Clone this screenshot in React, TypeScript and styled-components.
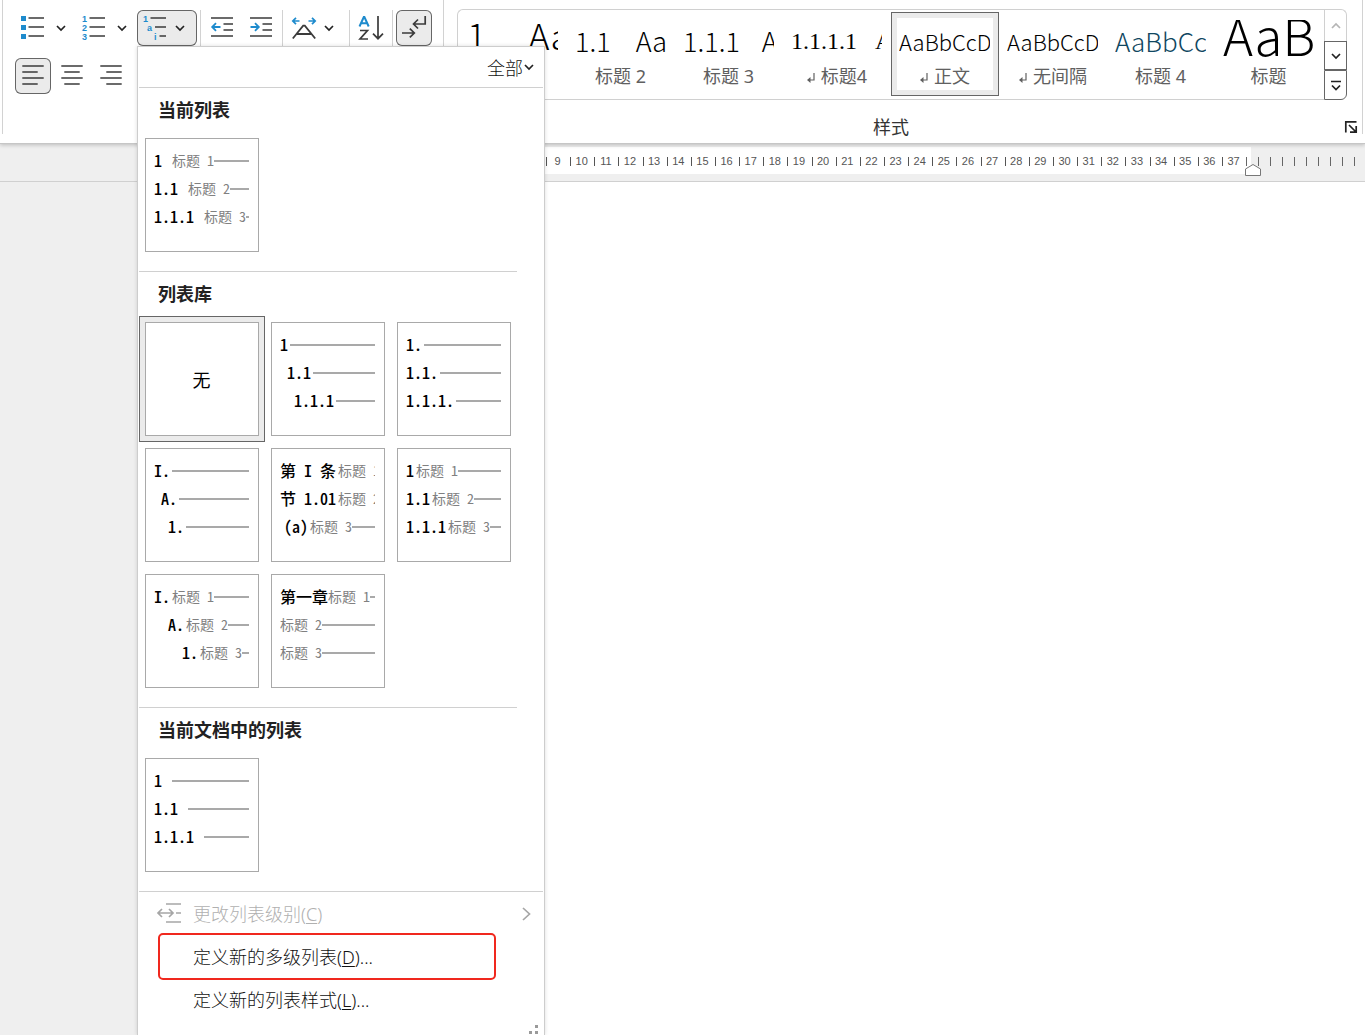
import React from "react";
import styled, { createGlobalStyle, css } from "styled-components";

const INK = "#3b3b3b";
const BLUE = "#1e8bcd";
const CJK = '"Noto Sans", "Noto Sans CJK SC", sans-serif';
const LIGHT_CJK = '"Noto Sans CJK SC", "Noto Sans", sans-serif';

const GlobalStyle = createGlobalStyle`
  *, *::before, *::after { box-sizing: border-box; }
  body { margin: 0; background: #fff; font-family: ${CJK}; }
  button { font: inherit; color: inherit; background: none; border: 0; padding: 0; margin: 0; cursor: pointer; }
  h2, p { margin: 0; }
  svg { display: block; flex: none; overflow: visible; }
`;

const Window = styled.div`
  min-height: 100vh;
  display: flex;
  flex-direction: column;
  overflow: hidden;
`;

/* ---------- ribbon ---------- */

const Ribbon = styled.header`
  position: relative;
  z-index: 2;
  display: flex;
  height: 144px;
  padding-left: 2px;
  padding-right: 2px;
  background: #fff;
  border-bottom: 1px solid #c6c6c6;
  box-shadow: 0 1px 4px rgba(0, 0, 0, 0.22);
`;

const GroupRule = styled.div`
  flex: none;
  width: 1px;
  height: 134px;
  background: #d2d2d2;
`;

const ParagraphGroup = styled.section`
  flex: none;
  width: 440px;
  padding: 10px 0 0 12px;
  display: flex;
  flex-direction: column;
  gap: 12px;
`;

const ToolRow = styled.div`
  display: flex;
  gap: 3px;
`;

const Pair = styled.div`
  display: flex;
  gap: 1px;
`;

const ToolRule = styled.div`
  width: 1px;
  height: 36px;
  background: #d2d2d2;
`;

const pressed = css`
  background: #ebebeb;
  box-shadow: inset 0 0 0 1px #666;
`;

const ToolButton = styled.button<{ $on?: boolean }>`
  width: 36px;
  height: 36px;
  border-radius: 6px;
  display: flex;
  align-items: center;
  justify-content: center;
  ${(p) => p.$on && pressed}
`;

const SplitButton = styled.button<{ $on?: boolean; $wide?: boolean }>`
  width: 60px;
  height: 36px;
  border-radius: 6px;
  display: flex;
  align-items: center;
  padding-left: 6px;
  gap: ${(p) => (p.$wide ? 11 : 8)}px;
  ${(p) => p.$on && pressed}
`;

const MenuAnchor = styled.div`
  position: relative;
`;

const StylesGroup = styled.section`
  flex: 1;
  min-width: 0;
  padding: 9px 15px 0 13px;
`;

const Gallery = styled.div`
  display: flex;
  height: 91px;
`;

const StyleList = styled.div`
  flex: 1;
  min-width: 0;
  display: flex;
  overflow: hidden;
  padding: 2px 0 0 1px;
  border: 1px solid #d0d0d0;
  border-right: 0;
  border-radius: 6px 0 0 6px;
`;

const StyleCard = styled.button<{ $on?: boolean }>`
  flex: none;
  width: 108px;
  height: 84px;
  border: 1px solid ${(p) => (p.$on ? "#666" : "transparent")};
  padding: 5px;
  background: ${(p) => (p.$on ? "#ebebeb" : "transparent")};
`;

const StyleFace = styled.span`
  display: flex;
  flex-direction: column;
  height: 72px;
  padding: 2px 3px 0 2px;
  background: #fff;
`;

const Sample = styled.span<{
  $size: number;
  $color?: string;
  $serif?: boolean;
  $weight?: number;
  $gap?: number;
  $tall?: boolean;
}>`
  display: flex;
  gap: ${(p) => p.$gap ?? 0}px;
  height: 43px;
  overflow: hidden;
  white-space: nowrap;
  font-family: ${(p) => (p.$serif ? '"Liberation Serif", serif' : LIGHT_CJK)};
  font-weight: ${(p) => p.$weight ?? 300};
  font-size: ${(p) => p.$size}px;
  line-height: ${(p) => (p.$tall ? 28 : 42)}px;
  color: ${(p) => p.$color ?? "#000"};
`;

const StyleName = styled.span`
  display: flex;
  align-items: center;
  justify-content: center;
  gap: 6px;
  height: 27px;
  font-size: 18px;
  line-height: 27px;
  white-space: nowrap;
  color: #606060;
`;

const ScrollColumn = styled.div`
  flex: none;
  width: 23px;
  display: grid;
  grid-template-rows: 32px 29px 30px;
`;

const ScrollButton = styled.button<{ $place: "top" | "mid" | "end" }>`
  display: flex;
  align-items: center;
  justify-content: center;
  border: 1px solid ${(p) => (p.$place === "top" ? "#d0d0d0" : "#666")};
  border-bottom-width: ${(p) => (p.$place === "top" ? 0 : 1)}px;
  border-radius: ${(p) => (p.$place === "top" ? "0 6px 0 0" : p.$place === "end" ? "0 0 6px 0" : "0")};
`;

const GroupFooter = styled.div`
  margin-top: 17px;
  margin-right: -10px;
  display: flex;
  align-items: center;
`;

const GroupLabel = styled.p`
  flex: 1;
  padding-right: 20px;
  text-align: center;
  font-size: 18px;
  line-height: 20px;
  color: #333;
`;

/* ---------- ruler and page ---------- */

const RulerBar = styled.div`
  display: flex;
  height: 38px;
  padding-top: 3px;
  background: #efefef;
  border-bottom: 1px solid #d0d0d0;
`;

const RulerMargin = styled.div`
  flex: none;
  width: 138px;
`;

const RulerText = styled.div`
  position: relative;
  flex: none;
  width: 1113px;
  height: 27px;
  padding: 1px 4px 0 408px;
  display: flex;
  align-items: center;
  background: #fff;
`;

const RulerCell = styled.span`
  flex: 1;
  height: 9px;
  border-left: 1px solid #555;
  display: flex;
  align-items: center;
  justify-content: center;
  padding-right: 2px;
  font: 11px/11px "Liberation Sans", sans-serif;
  color: #555;
`;

const IndentMarker = styled.div`
  position: absolute;
  right: -10px;
  top: 16px;
`;

const RulerTail = styled.div`
  flex: 1;
  height: 27px;
  padding: 1px 0 0 7px;
  display: flex;
  align-items: center;
  overflow: hidden;
`;

const Tick = styled.i<{ $last?: boolean }>`
  flex: none;
  width: ${(p) => (p.$last ? 1 : 12)}px;
  height: 9px;
  border-left: 1px solid #666;
`;

const Workspace = styled.main`
  flex: 1;
  display: flex;
`;

const Gutter = styled.div`
  flex: none;
  width: 138px;
  background: #efefef;
`;

const Paper = styled.div`
  flex: 1;
  background: #fff;
`;

/* ---------- list menu ---------- */

const Menu = styled.div`
  position: absolute;
  top: 36px;
  left: 0;
  width: 408px;
  padding: 0 1px;
  background: #fff;
  border: 1px solid #cdcdcd;
  border-bottom: 0;
  box-shadow: 0 0 4px rgba(0, 0, 0, 0.14);
  color: #222;
`;

const MenuHead = styled.div`
  display: flex;
  justify-content: flex-end;
  height: 41px;
  padding-right: 9px;
  border-bottom: 1px solid #d0d0d0;
`;

const FilterButton = styled.button`
  display: flex;
  align-items: center;
  gap: 1px;
  font-family: ${LIGHT_CJK};
  font-weight: 300;
  font-size: 18px;
  line-height: 20px;
  color: #111;
`;

const Section = styled.section`
  padding-bottom: 13px;
`;

const SectionTitle = styled.h2`
  height: 44px;
  padding-left: 19px;
  font-size: 18px;
  font-weight: 700;
  line-height: 44px;
`;

const Cells = styled.div`
  display: grid;
  grid-template-columns: repeat(3, 126px);
`;

const Rule = styled.div<{ $full?: boolean }>`
  height: 1px;
  margin-right: ${(p) => (p.$full ? 0 : 26)}px;
  background: #d0d0d0;
`;

const Cell = styled.button<{ $on?: boolean }>`
  width: 126px;
  height: 126px;
  padding: 5px;
  border: 1px solid ${(p) => (p.$on ? "#666" : "transparent")};
  background: ${(p) => (p.$on ? "#ebebeb" : "transparent")};
`;

const Card = styled.span<{ $center?: boolean }>`
  display: flex;
  flex-direction: column;
  align-items: ${(p) => (p.$center ? "center" : "stretch")};
  justify-content: ${(p) => (p.$center ? "center" : "flex-start")};
  height: 114px;
  padding: 8px 9px 8px 8px;
  border: 1px solid #a9a9a9;
  background: #fff;
  font-family: ${LIGHT_CJK};
  font-size: 18px;
  color: #000;
`;

const Level = styled.span<{ $indent: number }>`
  display: flex;
  align-items: center;
  height: 28px;
  padding-left: ${(p) => p.$indent}px;
  overflow: hidden;
  white-space: pre;
  font-feature-settings: "hwid";
`;

const Mark = styled.span<{ $gap: number }>`
  flex: none;
  margin-right: ${(p) => p.$gap}px;
  padding-bottom: 2px;
  font-size: 16px;
  font-weight: 500;
  line-height: 26px;
`;

const Heading = styled.span`
  flex: none;
  padding-bottom: 2px;
  font-size: 14px;
  font-weight: 400;
  line-height: 26px;
  color: #808080;
`;

const Stroke = styled.i`
  flex: 1;
  height: 2px;
  background: #a9a9a9;
`;

const Commands = styled.div`
  position: relative;
`;

const Command = styled.button`
  display: flex;
  align-items: center;
  width: 100%;
  height: 43px;
  padding: 0 12px 0 18px;
  font-family: ${CJK};
  font-weight: 300;
  font-size: 18px;
  line-height: 24px;
  text-align: left;
  color: #111;
  &:disabled { color: #b0b0b0; cursor: default; }
`;

const CommandIcon = styled.span`
  flex: none;
  width: 36px;
`;

const CommandText = styled.span`
  flex: 1;
  u { text-underline-offset: 2px; text-decoration-thickness: 1px; }
`;

const Callout = styled.div`
  position: absolute;
  top: 41px;
  left: 19px;
  right: 47px;
  height: 47px;
  border: 2px solid #f0281e;
  border-radius: 5px;
  pointer-events: none;
`;

const MenuFoot = styled.div`
  display: flex;
  justify-content: flex-end;
  align-items: flex-end;
  height: 14px;
  padding-right: 4px;
`;

/* ---------- icons ---------- */

const Chevron = ({ color = "#222", up = false }: { color?: string; up?: boolean }) => (
  <svg width="10" height="6" viewBox="0 0 10 6" fill="none" stroke={color} strokeWidth="1.7">
    <path d={up ? "M1 5 L5 1 L9 5" : "M1 1 L5 5 L9 1"} />
  </svg>
);

const Icon = ({ children }: { children: React.ReactNode }) => (
  <svg width="24" height="24" viewBox="0 0 24 24" fill="none" stroke={INK} strokeWidth="1.5">
    {children}
  </svg>
);

const glyph = { fill: BLUE, stroke: "none", fontFamily: "Liberation Sans", fontWeight: 700, fontSize: 9 };

const BulletsIcon = () => (
  <Icon>
    <path d="M0 0h5v5H0zM0 9h5v5H0zM0 18h5v5H0z" fill={BLUE} stroke="none" />
    <path d="M7.500 2h15.500M7.500 11h15.500M7.500 20h15.500" />
  </Icon>
);

const NumbersIcon = () => (
  <Icon>
    <text {...glyph} x="0" y="6">1</text>
    <text {...glyph} x="0" y="15">2</text>
    <text {...glyph} x="0" y="24">3</text>
    <path d="M7.500 2H23M7.500 11H23M7.500 20H23" />
  </Icon>
);

const MultiIcon = () => (
  <Icon>
    <text {...glyph} x="0" y="6">1</text>
    <text {...glyph} x="4" y="15">a</text>
    <text {...glyph} x="11" y="24">i</text>
    <path d="M7.500 2H23M12 11h11M16.500 20H23" />
  </Icon>
);

const IndentIcon = ({ out = false }: { out?: boolean }) => (
  <Icon>
    <path d="M1 2h22M1 20h22M13.500 8H23M13.500 14H23" />
    <path d={out ? "M10.500 11H2.500M6 7.200L2.200 11L6 14.800" : "M1.500 11h8M6 7.200L9.800 11L6 14.800"} stroke={BLUE} strokeWidth="1.8" />
  </Icon>
);

const ScaleIcon = () => (
  <Icon>
    <path d="M7.500 5H1M4 1.800L.8 5L4 8.200M16.500 5H23M20 1.800L23.200 5L20 8.200" stroke={BLUE} strokeWidth="1.700" />
    <path d="M.8 22.500L11.200 9.700h1.600L23.200 22.500M5 18h14" strokeWidth="1.800" />
  </Icon>
);

const SortIcon = () => (
  <svg width="26" height="24" viewBox="0 0 26 24" fill="none" stroke={INK} strokeWidth="1.7">
    <path d="M1.500 10.500L5.800 1h.6l4.300 9.500M3.200 7.200h5.800" stroke={BLUE} strokeWidth="2" />
    <path d="M2 14.500h7.500L2 23h8M20 0v22.500M15 17.700l5 5l5-5" />
  </svg>
);

const MarksIcon = () => (
  <Icon>
    <path d="M23.200 0v8H11.500M16 3.500L11.500 8L16 12.500M0 17h12M7.800 12.700L12.300 17L7.800 21.300" strokeWidth="1.700" />
  </Icon>
);

const AlignIcon = ({ side }: { side: "left" | "center" | "right" }) => {
  const x = side === "left" ? 1.3 : side === "center" ? 4.3 : 7.3;
  return (
    <Icon>
      <path d={`M1.300 2h21.400M${x} 8h15.400M1.300 14h21.400M${x} 20h15.400`} />
    </Icon>
  );
};

const ReturnGlyph = () => (
  <svg width="9" height="10" viewBox="0 0 9 10" fill="none" stroke="#606060" strokeWidth="1.2">
    <path d="M8 1v7H2" />
    <path d="M4.500 5L1 8l3.500 3z" fill="#606060" stroke="none" />
  </svg>
);

const MoreGlyph = () => (
  <svg width="12" height="11" viewBox="0 0 12 11" fill="none" stroke="#222" strokeWidth="1.7">
    <path d="M1 1.500h10M2 5.500l4 4l4-4" />
  </svg>
);

const LauncherGlyph = () => (
  <svg width="12" height="12" viewBox="0 0 12 12" fill="none" stroke="#222" strokeWidth="1.700">
    <path d="M.8 11.500V.8h10.700M4 4l6.500 6.500M11.200 5v6.200H5" />
  </svg>
);

const LevelIcon = () => (
  <svg width="26" height="22" viewBox="0 0 26 22" fill="none" stroke="#a6a6a6" strokeWidth="1.700">
    <path d="M9 1h15M19 10h5M9 19h15M1 10h15M5 6l-4 4l4 4M12 6l4 4l-4 4" />
  </svg>
);

const Submenu = () => (
  <svg width="9" height="14" viewBox="0 0 9 14" fill="none" stroke="#a6a6a6" strokeWidth="1.700">
    <path d="M1 1l6.500 6L1 13" />
  </svg>
);

const Grip = () => (
  <svg width="10" height="10" viewBox="0 0 10 10" fill="#9a9a9a">
    <path d="M6 0h3v3H6zM0 6h3v3H0zM6 6h3v3H6z" />
  </svg>
);

/* ---------- data ---------- */

type LevelSpec = { mark?: string; indent?: number; gap?: number; heading?: string };

const currentList: LevelSpec[] = [
  { mark: "1", gap: 10, heading: "标题 1" },
  { mark: "1.1", gap: 10, heading: "标题 2" },
  { mark: "1.1.1", gap: 10, heading: "标题 3" },
];

const library: LevelSpec[][] = [
  [{ mark: "1" }, { mark: "1.1", indent: 7 }, { mark: "1.1.1", indent: 14 }],
  [{ mark: "1." }, { mark: "1.1." }, { mark: "1.1.1." }],
  [{ mark: "I." }, { mark: "A.", indent: 7 }, { mark: "1.", indent: 14 }],
  [
    { mark: "第 I 条", heading: "标题 1" },
    { mark: "节 1.01", heading: "标题 2" },
    { mark: "(a)", indent: 4, heading: "标题 3" },
  ],
  [
    { mark: "1", heading: "标题 1" },
    { mark: "1.1", heading: "标题 2" },
    { mark: "1.1.1", heading: "标题 3" },
  ],
  [
    { mark: "I.", heading: "标题 1" },
    { mark: "A.", indent: 14, heading: "标题 2" },
    { mark: "1.", indent: 28, heading: "标题 3" },
  ],
  [{ mark: "第一章", gap: 0, heading: "标题 1" }, { heading: "标题 2" }, { heading: "标题 3" }],
];

const documentList: LevelSpec[] = [
  { mark: "1", gap: 10 },
  { mark: "1.1", gap: 10 },
  { mark: "1.1.1", gap: 10 },
];

type StyleSpec = {
  name?: string;
  parts: string[];
  size: number;
  gap?: number;
  weight?: number;
  color?: string;
  serif?: boolean;
  tall?: boolean;
  mark?: boolean;
  on?: boolean;
};

const styleSpecs: StyleSpec[] = [
  { parts: ["1", "Aa"], size: 36, gap: 42, tall: true },
  { name: "标题 2", parts: ["1.1", "Aa"], size: 27, gap: 25 },
  { name: "标题 3", parts: ["1.1.1", "A"], size: 27, gap: 22 },
  { name: "标题4", parts: ["1.1.1.1", "A"], size: 24, gap: 18, weight: 400, serif: true, mark: true },
  { name: "正文", parts: ["AaBbCcDd"], size: 22, mark: true, on: true },
  { name: "无间隔", parts: ["AaBbCcDd"], size: 22, mark: true },
  { name: "标题 4", parts: ["AaBbCcD"], size: 26, color: "#0f4761" },
  { name: "标题", parts: ["AaB"], size: 51, tall: true },
];

const rulerNumbers = Array.from({ length: 29 }, (_, i) => i + 9);

/* ---------- parts ---------- */

const ListCell = ({ levels, label }: { levels: LevelSpec[]; label: string }) => (
  <Cell type="button" aria-label={label}>
    <Card>
      {levels.map((l, i) => (
        <Level key={i} $indent={l.indent ?? 0}>
          {l.mark && <Mark $gap={l.gap ?? 2}>{l.mark}</Mark>}
          {l.heading && <Heading>{l.heading}</Heading>}
          <Stroke />
        </Level>
      ))}
    </Card>
  </Cell>
);

const ListMenu = () => (
  <Menu>
    <MenuHead>
      <FilterButton type="button">
        全部
        <Chevron />
      </FilterButton>
    </MenuHead>
    <Section>
      <SectionTitle>当前列表</SectionTitle>
      <Cells>
        <ListCell levels={currentList} label="当前列表" />
      </Cells>
    </Section>
    <Rule />
    <Section>
      <SectionTitle>列表库</SectionTitle>
      <Cells>
        <Cell type="button" $on>
          <Card $center>无</Card>
        </Cell>
        {library.map((levels, i) => (
          <ListCell key={i} levels={levels} label={`列表 ${i + 1}`} />
        ))}
      </Cells>
    </Section>
    <Rule />
    <Section>
      <SectionTitle>当前文档中的列表</SectionTitle>
      <Cells>
        <ListCell levels={documentList} label="文档列表" />
      </Cells>
    </Section>
    <Rule $full />
    <Commands>
      <Command type="button" disabled>
        <CommandIcon><LevelIcon /></CommandIcon>
        <CommandText>更改列表级别(<u>C</u>)</CommandText>
        <Submenu />
      </Command>
      <Command type="button">
        <CommandIcon />
        <CommandText>定义新的多级列表(<u>D</u>)...</CommandText>
      </Command>
      <Command type="button">
        <CommandIcon />
        <CommandText>定义新的列表样式(<u>L</u>)...</CommandText>
      </Command>
      <Callout />
    </Commands>
    <MenuFoot><Grip /></MenuFoot>
  </Menu>
);

export default function App() {
  return (
    <Window>
      <GlobalStyle />
      <Ribbon>
        <GroupRule />
        <ParagraphGroup>
          <ToolRow>
            <Pair>
              <SplitButton type="button" aria-label="项目符号" $wide><BulletsIcon /><Chevron /></SplitButton>
              <SplitButton type="button" aria-label="编号" $wide><NumbersIcon /><Chevron /></SplitButton>
              <MenuAnchor>
                <SplitButton type="button" aria-label="多级列表" aria-expanded $on><MultiIcon /><Chevron /></SplitButton>
                <ListMenu />
              </MenuAnchor>
            </Pair>
            <ToolRule />
            <ToolButton type="button" aria-label="减少缩进量"><IndentIcon out /></ToolButton>
            <ToolButton type="button" aria-label="增加缩进量"><IndentIcon /></ToolButton>
            <ToolRule />
            <SplitButton type="button" aria-label="中文版式"><ScaleIcon /><Chevron /></SplitButton>
            <ToolRule />
            <ToolButton type="button" aria-label="排序"><SortIcon /></ToolButton>
            <ToolRule />
            <ToolButton type="button" aria-label="显示编辑标记" $on><MarksIcon /></ToolButton>
          </ToolRow>
          <ToolRow>
            <ToolButton type="button" aria-label="左对齐" $on><AlignIcon side="left" /></ToolButton>
            <ToolButton type="button" aria-label="居中"><AlignIcon side="center" /></ToolButton>
            <ToolButton type="button" aria-label="右对齐"><AlignIcon side="right" /></ToolButton>
          </ToolRow>
        </ParagraphGroup>
        <GroupRule />
        <StylesGroup>
          <Gallery>
            <StyleList>
              {styleSpecs.map((s, i) => (
                <StyleCard key={i} type="button" $on={s.on}>
                  <StyleFace>
                    <Sample
                      $size={s.size}
                      $gap={s.gap}
                      $weight={s.weight}
                      $color={s.color}
                      $serif={s.serif}
                      $tall={s.tall}
                    >
                      {s.parts.map((p) => <span key={p}>{p}</span>)}
                    </Sample>
                    {s.name && (
                      <StyleName>
                        {s.mark && <ReturnGlyph />}
                        {s.name}
                      </StyleName>
                    )}
                  </StyleFace>
                </StyleCard>
              ))}
            </StyleList>
            <ScrollColumn>
              <ScrollButton type="button" aria-label="上一行" $place="top" disabled><Chevron up color="#b5b5b5" /></ScrollButton>
              <ScrollButton type="button" aria-label="下一行" $place="mid"><Chevron /></ScrollButton>
              <ScrollButton type="button" aria-label="其他" $place="end"><MoreGlyph /></ScrollButton>
            </ScrollColumn>
          </Gallery>
          <GroupFooter>
            <GroupLabel>样式</GroupLabel>
            <button type="button" aria-label="样式窗格"><LauncherGlyph /></button>
          </GroupFooter>
        </StylesGroup>
        <GroupRule />
      </Ribbon>
      <RulerBar>
        <RulerMargin />
        <RulerText>
          {rulerNumbers.map((n) => <RulerCell key={n}>{n}</RulerCell>)}
          <Tick $last />
          <IndentMarker>
            <svg width="16" height="14" viewBox="0 0 16 14" fill="#fff" stroke="#777">
              <path d="M.5 12.500V6L8 1.500L15.500 6v6.500z" />
            </svg>
          </IndentMarker>
        </RulerText>
        <RulerTail>
          {Array.from({ length: 9 }, (_, i) => <Tick key={i} />)}
        </RulerTail>
      </RulerBar>
      <Workspace>
        <Gutter />
        <Paper />
      </Workspace>
    </Window>
  );
}
